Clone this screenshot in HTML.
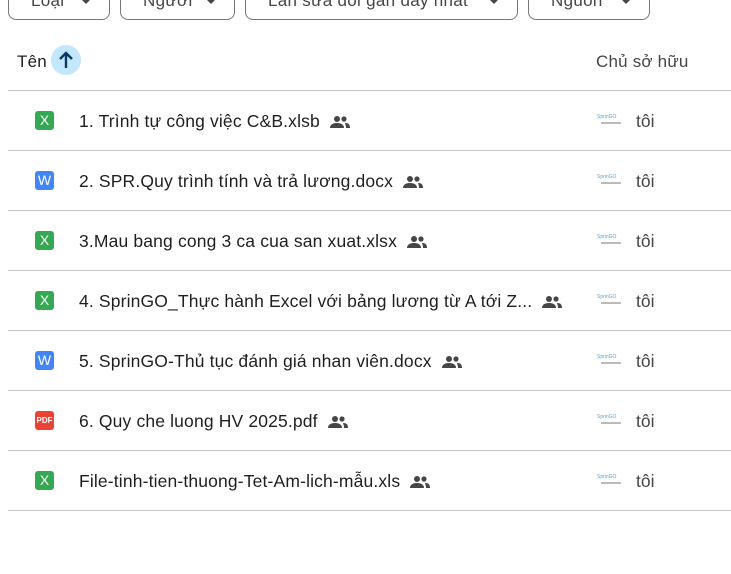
<!DOCTYPE html>
<html><head><meta charset="utf-8"><style>
body{margin:0;width:731px;height:574px;background:#fff;font-family:"Liberation Sans",Arial,sans-serif;color:#1f1f1f;position:relative;overflow:hidden}
.btn{position:absolute;top:-20px;height:40px;border:1px solid #747775;border-radius:8px;box-sizing:border-box;font-size:17px;color:#444746}
.btn span{position:absolute;top:10px;left:22px;letter-spacing:0.3px}
.btn i{position:absolute;top:18px;right:18px;width:0;height:0;border-left:5px solid transparent;border-right:5px solid transparent;border-top:5px solid #444746}
.hdr{position:absolute;top:52px;font-size:17px;letter-spacing:0.2px}
.circ{position:absolute;left:51px;top:45px;width:30px;height:30px;border-radius:50%;background:#c2e7ff}
.line{position:absolute;left:8px;right:0;height:1px;background:#c7c7c7}
.row{position:absolute;left:0;right:0;height:60px}
.ic{position:absolute;left:35px;top:21px;width:19px;height:19px;border-radius:3px;color:#fff;font-size:14px;text-align:center;line-height:19px}
.x{background:#34a853}.w{background:#4285f4}.p{background:#ea4335;font-size:8px;font-weight:bold}
.nm{position:absolute;left:79px;top:21px;font-size:17.5px;letter-spacing:0.15px;color:#1f1f1f;white-space:nowrap}
.nm svg{vertical-align:-2px;margin-left:10px}
.av{position:absolute;left:597px;top:24px;width:27px;height:12px;font-size:5px;color:#5aa7d8;line-height:6px}
.av b{display:block;width:20px;height:2px;background:#bbb;margin:2px 0 0 4px}
.me{position:absolute;left:636px;top:21px;font-size:17.5px;color:#444746}
</style></head><body>
<div class="btn" style="left:8px;width:102px"><span>Loại</span><i></i></div>
<div class="btn" style="left:120px;width:115px"><span>Người</span><i></i></div>
<div class="btn" style="left:245px;width:273px"><span>Lần sửa đổi gần đây nhất</span><i></i></div>
<div class="btn" style="left:528px;width:122px"><span>Nguồn</span><i></i></div>
<div class="hdr" style="left:17px">Tên</div>
<div class="circ"><svg width="30" height="30" viewBox="0 0 30 30"><path d="M15 23V8M9 14l6-6 6 6" stroke="#0b3a5e" stroke-width="2.4" fill="none"/></svg></div>
<div class="hdr" style="left:596px;color:#444746">Chủ sở hữu</div>
<div class="line" style="top:90px"></div>

<div id="rows"></div>
<script>
var d=[["x","X","1. Trình tự công việc C&amp;B.xlsb"],["w","W","2. SPR.Quy trình tính và trả lương.docx"],["x","X","3.Mau bang cong 3 ca cua san xuat.xlsx"],["x","X","4. SprinGO_Thực hành Excel với bảng lương từ A tới Z..."],["w","W","5. SprinGO-Thủ tục đánh giá nhan viên.docx"],["p","PDF","6. Quy che luong HV 2025.pdf"],["x","X","File-tinh-tien-thuong-Tet-Am-lich-mẫu.xls"]];
var ppl='<svg width="20" height="14" viewBox="0 0 20 14"><circle cx="7" cy="4" r="3" fill="#444746"/><circle cx="14" cy="4" r="2.6" fill="#444746"/><path d="M0 13c0-4 4-5 7-5s7 1 7 5z" fill="#444746"/><path d="M15 8c3 0 5 1 5 5h-4c0-2-0.5-3.5-1-5z" fill="#444746"/></svg>';
var h='';d.forEach(function(r,i){var t=90+i*60;h+='<div class="row" style="top:'+t+'px"><div class="ic '+r[0]+'">'+r[1]+'</div><div class="nm">'+r[2]+ppl+'</div><div class="av">SprinGO<b></b></div><div class="me">tôi</div></div><div class="line" style="top:'+(t+60)+'px"></div>';});
document.getElementById('rows').innerHTML=h;
</script>
</body></html>
